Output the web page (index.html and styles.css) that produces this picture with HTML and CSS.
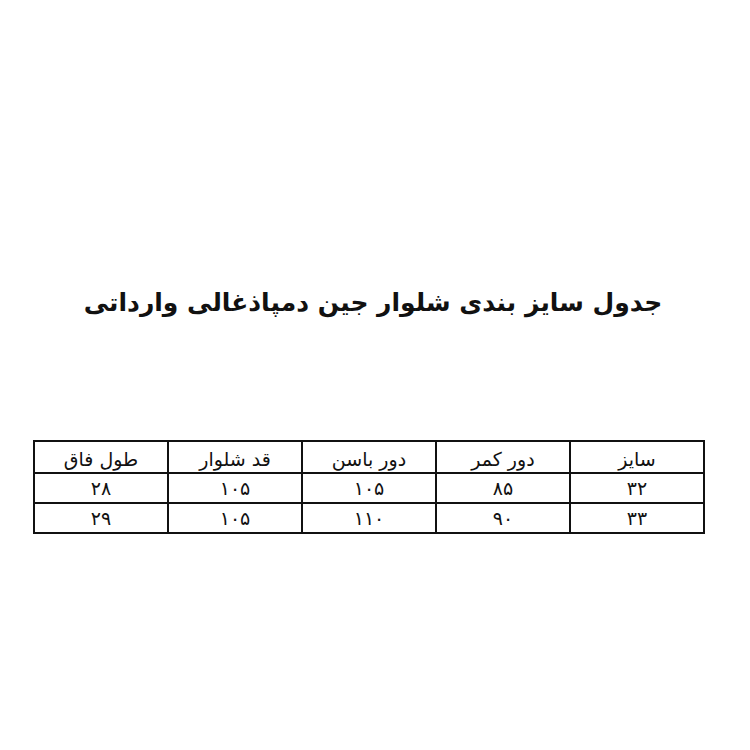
FILE: index.html
```html
<!DOCTYPE html>
<html lang="fa" dir="rtl">
<head>
<meta charset="utf-8">
<title>جدول سایز</title>
<link rel="stylesheet" href="styles.css">
</head>
<body>
<main class="page">
  <h1 class="title">جدول سایز بندی شلوار جین دمپاذغالی وارداتی</h1>
  <table class="sizes">
    <thead>
      <tr><th>سایز</th><th>دور کمر</th><th>دور باسن</th><th>قد شلوار</th><th>طول فاق</th></tr>
    </thead>
    <tbody>
      <tr><td>۳۲</td><td>۸۵</td><td>۱۰۵</td><td>۱۰۵</td><td>۲۸</td></tr>
      <tr><td>۳۳</td><td>۹۰</td><td>۱۱۰</td><td>۱۰۵</td><td>۲۹</td></tr>
    </tbody>
  </table>
</main>
</body>
</html>
```
FILE: styles.css
```css
html, body {
  margin: 0;
  padding: 0;
  background: #ffffff;
}
.page {
  width: 750px;
  height: 750px;
  display: flex;
  flex-direction: column;
  align-items: center;
  font-family: "DejaVu Sans", sans-serif;
  color: #111;
}
.title {
  margin: 283px 4px 0 0;
  font-size: 25px;
  line-height: 40px;
  font-weight: bold;
  text-align: center;
}
.sizes {
  margin-top: 117px;
  margin-right: 45px;
  align-self: flex-start;
  width: 672px;
  border-collapse: collapse;
  table-layout: fixed;
  border: 2px solid #111;
}
.sizes th, .sizes td {
  border: 2px solid #111;
  text-align: center;
  font-weight: normal;
  font-size: 19px;
  padding: 0;
}
.sizes th {
  height: 27px;
  padding-top: 3px;
}
.sizes td {
  height: 28px;
}
```
